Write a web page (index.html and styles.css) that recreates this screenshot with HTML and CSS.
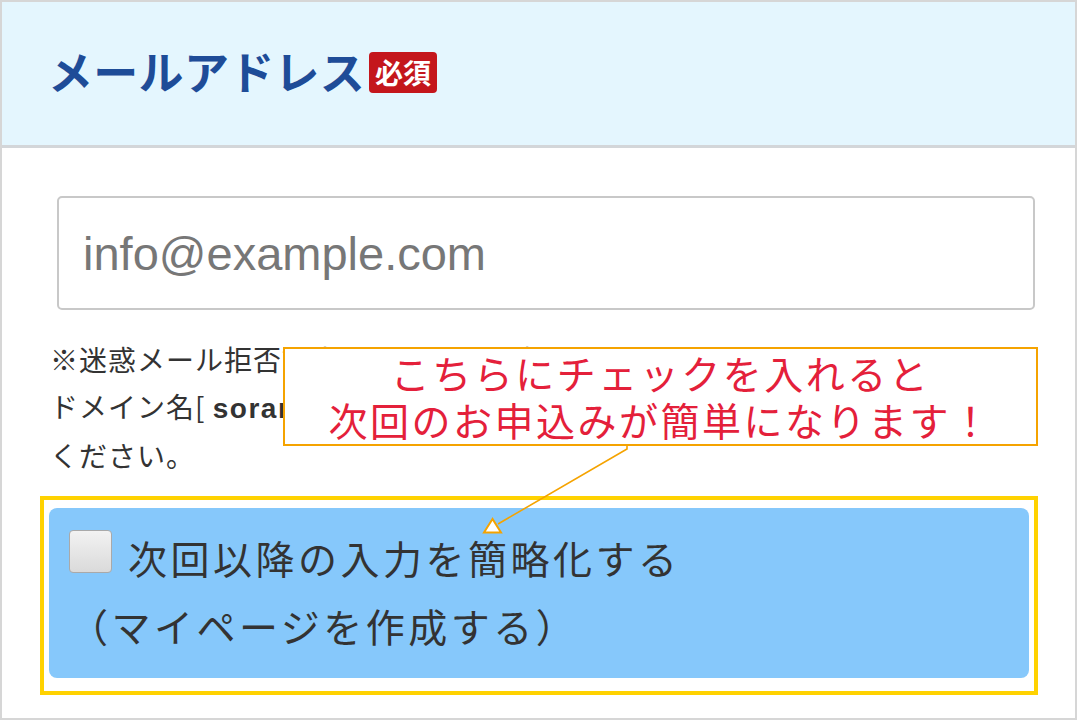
FILE: index.html
```html
<!DOCTYPE html>
<html lang="ja">
<head>
  <meta charset="UTF-8" />
  <title>メールアドレス</title>
  <link rel="stylesheet" href="styles.css">
</head>
<body>
  <div class="form-frame">
    <div class="field-head">
      <h2>メールアドレス</h2>
      <span class="required">必須</span>
    </div>

    <div class="field-body">
      <input type="email" class="mail-input" placeholder="info@example.com" />

      <p class="note">
        ※迷惑メール拒否設定をされている方は、<br>
        ドメイン名[ <b>sorane.jp</b> ]からのメールを受信できるよう設定して<br>
        ください。
      </p>

      <div class="mypage-box">
        <label class="mypage-check">
          <span class="check"></span><span class="check-text">次回以降の入力を簡略化する</span><br>
          <span class="check-text">（マイページを作成する）</span>
        </label>
      </div>
    </div>

    <!-- callout -->
    <div class="callout">こちらにチェックを入れると<br>次回のお申込みが簡単になります！</div>
    <svg class="pointer" width="1077" height="720" viewBox="0 0 1077 720">
      <polyline points="627,446 627,449 498,524" fill="none" stroke="#f5a300" stroke-width="1.6" />
      <polygon points="492.5,519 484,532.5 501,532.5" fill="#fff" stroke="#f5a300" stroke-width="2" />
    </svg>
  </div>
</body>
</html>
```

FILE: styles.css
```css
body {
  margin: 0;
  background: #fff;
  font-family: "Noto Sans CJK JP", sans-serif;
}

.form-frame {
  position: relative;
  width: 1077px;
  height: 720px;
  box-sizing: border-box;
  border: 2px solid #d6d6d6;
  overflow: hidden;
}

.field-head {
  display: flex;
  align-items: center;
  height: 146px;
  padding-left: 46px;
  padding-bottom: 6px;
  box-sizing: border-box;
  background: #e4f6fe;
  border-bottom: 3px solid #d3d6d9;
}

.field-head h2 {
  margin: 0;
  font-size: 45px;
  font-weight: bold;
  color: #1e4c98;
  letter-spacing: 0.3px;
}

.required {
  margin-left: 4px;
  margin-top: 4px;
  background: #c4161c;
  color: #fff;
  font-size: 28px;
  font-weight: bold;
  line-height: 41px;
  padding: 0 6px;
  border-radius: 4px;
}

.field-body {
  padding: 48px 37px 0 38px;
}

.mail-input {
  display: block;
  box-sizing: border-box;
  width: 978px;
  height: 114px;
  margin-left: 17px;
  padding: 0 24px;
  border: 2px solid #c8c8c8;
  border-radius: 5px;
  font-family: "Liberation Sans", Arial, sans-serif;
  font-size: 47px;
}

.mail-input::placeholder {
  color: #777;
}

.note {
  margin: 26px 0 0 10px;
  font-size: 28px;
  line-height: 47px;
  letter-spacing: 1px;
  color: #333;
  white-space: nowrap;
}

.note b {
  font-family: "Liberation Sans", Arial, sans-serif;
  letter-spacing: 1.5px;
}

.mypage-box {
  margin-top: 17px;
  border: 4px solid #ffd200;
  padding: 8px 5px 13px 5px;
  height: 170px;
}

.mypage-check {
  display: block;
  height: 170px;
  box-sizing: border-box;
  padding: 21px 20px 0 20px;
  background: #86c8fb;
  border-radius: 8px;
  font-size: 39px;
  line-height: 68px;
  color: #333;
}

.check {
  display: inline-block;
  vertical-align: top;
  width: 41px;
  height: 41px;
  margin: 1px 16px 0 0;
  border: 1px solid #a9a9a9;
  border-radius: 4px;
  background: linear-gradient(#f2f2f2, #dadada);
}

.check-text {
  display: inline-block;
  vertical-align: top;
  margin-top: -6px;
  letter-spacing: 3.5px;
}

.callout {
  position: absolute;
  left: 281px;
  top: 345px;
  width: 751px;
  height: 95px;
  border: 2px solid #f5a300;
  background: #fff;
  color: #e4203a;
  font-size: 39px;
  line-height: 47px;
  letter-spacing: 2.5px;
  text-align: center;
}

.pointer {
  position: absolute;
  left: -2px;
  top: -2px;
  pointer-events: none;
}
```
